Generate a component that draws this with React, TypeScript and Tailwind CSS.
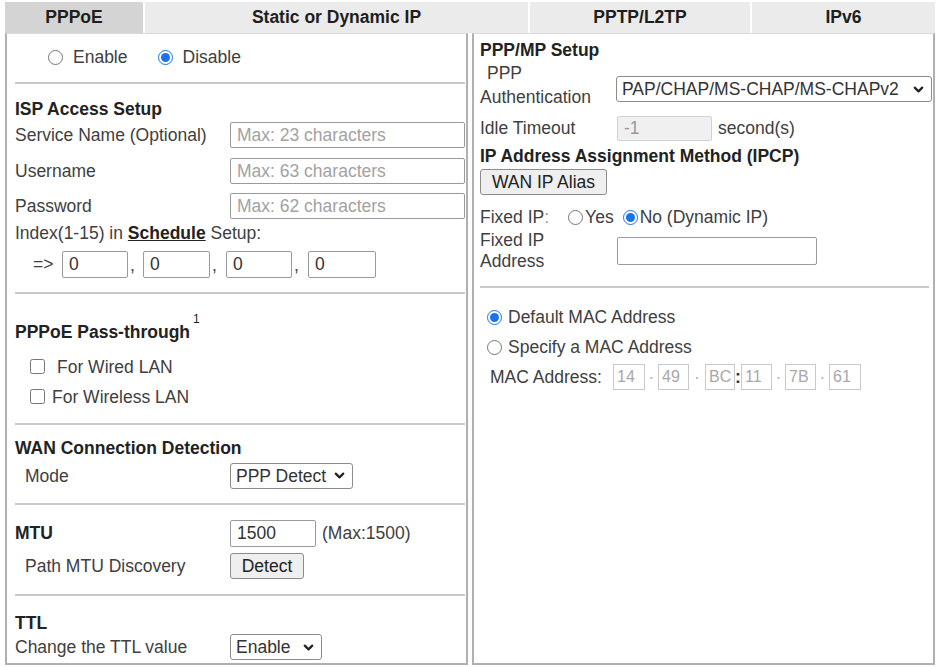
import { ChevronDown } from "lucide-react";

const Sep = () => <div className="h-[2px] bg-[#c8c8c8] shrink-0" />;

function Radio({ checked = false, className = "" }: { checked?: boolean; className?: string }) {
  return (
    <input
      type="radio"
      readOnly
      checked={checked}
      className={`w-[15px] h-[15px] m-0 shrink-0 accent-[#1a73e8] ${className}`}
    />
  );
}

function Check({ className = "" }: { className?: string }) {
  return <input type="checkbox" readOnly checked={false} className={`w-[15px] h-[15px] m-0 shrink-0 ${className}`} />;
}

function FakeSelect({ value, className = "" }: { value: string; className?: string }) {
  return (
    <div
      className={`flex items-center justify-between h-[26px] border border-[#8c8c8c] rounded-[3px] pl-[5px] pr-[5px] bg-white text-[#333] ${className}`}
    >
      <span className="whitespace-nowrap">{value}</span>
      <ChevronDown size={15} strokeWidth={3.5} className="text-[#222]" />
    </div>
  );
}

function TextBox({ placeholder, value, className = "" }: { placeholder?: string; value?: string; className?: string }) {
  return (
    <input
      readOnly
      placeholder={placeholder}
      value={value ?? ""}
      className={`h-[26px] border border-[#9a9a9a] rounded-[2px] px-[6px] bg-white text-[#333] placeholder:text-[#a2a2a2] ${className}`}
    />
  );
}

function Button({ label, className = "" }: { label: string; className?: string }) {
  return (
    <div
      className={`flex items-center justify-center h-[26px] bg-[#efefef] border border-[#8d8d8d] rounded-[3px] text-[#222] ${className}`}
    >
      {label}
    </div>
  );
}

function MacBox({ value, className = "" }: { value: string; className?: string }) {
  return (
    <div className={`h-[26px] border border-[#c9c9c9] text-[#a8a8a8] text-[16px] pl-[3px] flex items-center shrink-0 ${className}`}>
      {value}
    </div>
  );
}

const tabs = [
  { label: "PPPoE", w: "w-[140px]", active: true },
  { label: "Static or Dynamic IP", w: "w-[385px]", active: false },
  { label: "PPTP/L2TP", w: "w-[222px]", active: false },
  { label: "IPv6", w: "w-[183px]", active: false },
];

export default function App() {
  return (
    <div className="w-[940px] h-[667px] overflow-hidden bg-white font-['Liberation_Sans',Arial,sans-serif] text-[17.5px] text-[#404040] pt-[2px] pl-[5px]">
      {/* tab strip */}
      <div className="flex w-[930px] h-[31px]">
        {tabs.map((t) => (
          <div
            key={t.label}
            className={`${t.w} h-full flex items-center justify-center font-bold text-[#1e1e1e] border-r-2 border-white last:border-r-0 ${
              t.active ? "bg-[#d4d4d4]" : "bg-[#ebebeb]"
            }`}
          >
            {t.label}
          </div>
        ))}
      </div>

      <div className="flex gap-[4px] h-[632px]">
        {/* left column */}
        <div className="w-[463px] flex flex-col border-x-2 border-b-2 border-[#b0b0b0] border-t border-t-[#dadada] pl-[8px] pr-[1px]">
          <div className="mt-[10px] h-[26px] flex items-center">
            <Radio className="ml-[33px]" />
            <span className="ml-[10px]">Enable</span>
            <Radio checked className="ml-[30px]" />
            <span className="ml-[10px]">Disable</span>
          </div>
          <div className="mt-[12px]">
            <Sep />
          </div>

          <div className="mt-[13px] h-[24px] flex items-center font-bold text-[#222]">ISP Access Setup</div>
          <div className="mt-[1px] flex items-center">
            <span className="w-[215px]">Service Name (Optional)</span>
            <TextBox placeholder="Max: 23 characters" className="w-[235px]" />
          </div>
          <div className="mt-[10px] flex items-center">
            <span className="w-[215px]">Username</span>
            <TextBox placeholder="Max: 63 characters" className="w-[235px]" />
          </div>
          <div className="mt-[8px] flex items-center">
            <span className="w-[215px]">Password</span>
            <TextBox placeholder="Max: 62 characters" className="w-[235px]" />
          </div>
          <div className="mt-[2px] h-[24px] flex items-center whitespace-pre">
            <span>Index(1-15) in </span>
            <span className="font-bold underline text-[#222]">Schedule</span>
            <span> Setup:</span>
          </div>
          <div className="mt-[6px] flex items-center">
            <span className="ml-[18px] w-[29px]">=&gt;</span>
            <TextBox value="0" className="w-[66px] h-[27px]" />
            <span className="w-[15px] pl-[2px] self-end">,</span>
            <TextBox value="0" className="w-[67px] h-[27px]" />
            <span className="w-[16px] pl-[2px] self-end">,</span>
            <TextBox value="0" className="w-[66px] h-[27px]" />
            <span className="w-[16px] pl-[2px] self-end">,</span>
            <TextBox value="0" className="w-[68px] h-[27px]" />
          </div>
          <div className="mt-[14px]">
            <Sep />
          </div>

          <div className="mt-[26px] h-[24px] flex items-center font-bold text-[#222]">
            PPPoE Pass-through
            <sup className="text-[12px] font-normal ml-[3px] -top-[13px]">1</sup>
          </div>
          <div className="mt-[11px] h-[24px] flex items-center">
            <Check className="ml-[15px]" />
            <span className="ml-[12px]">For Wired LAN</span>
          </div>
          <div className="mt-[6px] h-[24px] flex items-center">
            <Check className="ml-[15px]" />
            <span className="ml-[7px]">For Wireless LAN</span>
          </div>
          <div className="mt-[14px]">
            <Sep />
          </div>

          <div className="mt-[11px] h-[24px] flex items-center font-bold text-[#222]">WAN Connection Detection</div>
          <div className="mt-[3px] flex items-center">
            <span className="w-[215px] pl-[10px]">Mode</span>
            <FakeSelect value="PPP Detect" className="w-[123px]" />
          </div>
          <div className="mt-[14px]">
            <Sep />
          </div>

          <div className="mt-[15px] flex items-center">
            <span className="w-[215px] font-bold text-[#222]">MTU</span>
            <TextBox value="1500" className="w-[86px] h-[27px]" />
            <span className="ml-[6px]">(Max:1500)</span>
          </div>
          <div className="mt-[6px] flex items-center">
            <span className="w-[215px] pl-[10px]">Path MTU Discovery</span>
            <Button label="Detect" className="w-[74px]" />
          </div>
          <div className="mt-[15px]">
            <Sep />
          </div>

          <div className="mt-[16px] h-[22px] flex items-center font-bold text-[#222]">TTL</div>
          <div className="flex items-center">
            <span className="w-[215px]">Change the TTL value</span>
            <FakeSelect value="Enable" className="w-[92px]" />
          </div>
        </div>

        {/* right column */}
        <div className="w-[463px] flex flex-col border-x-2 border-b-2 border-[#b0b0b0] border-t border-t-[#dadada] pl-[6px] pr-[1px]">
          <div className="mt-[5px] h-[22px] flex items-center font-bold text-[#222]">PPP/MP Setup</div>
          <div className="flex h-[48px]">
            <div className="w-[136px] flex flex-col leading-[24px]">
              <span className="pl-[7px]">PPP</span>
              <span>Authentication</span>
            </div>
            <FakeSelect value="PAP/CHAP/MS-CHAP/MS-CHAPv2" className="mt-[15px] w-[316px]" />
          </div>
          <div className="mt-[6px] flex items-center">
            <span className="w-[137px]">Idle Timeout</span>
            <div className="w-[95px] h-[25px] bg-[#f0f0f0] border border-[#d2d2d2] rounded-[2px] pl-[6px] flex items-center text-[#9a9a9a]">
              -1
            </div>
            <span className="ml-[6px]">second(s)</span>
          </div>
          <div className="mt-[4px] h-[22px] flex items-center font-bold text-[#222]">
            IP Address Assignment Method (IPCP)
          </div>
          <div className="mt-[2px] flex">
            <Button label="WAN IP Alias" className="w-[127px]" />
          </div>
          <div className="mt-[10px] h-[24px] flex items-center">
            <span>
              Fixed IP<span className="text-[#9a9a9a]">:</span>
            </span>
            <Radio className="ml-[19px]" />
            <span className="ml-[2px]">Yes</span>
            <Radio checked className="ml-[9px]" />
            <span className="ml-[2px]">No (Dynamic IP)</span>
          </div>
          <div className="mt-[1px] h-[42px] flex items-center">
            <div className="w-[137px] flex flex-col leading-[21px]">
              <span>Fixed IP</span>
              <span>Address</span>
            </div>
            <TextBox className="w-[200px] h-[28px]" />
          </div>
          <div className="mt-[14px] mr-[3px]">
            <Sep />
          </div>

          <div className="mt-[17px] h-[24px] flex items-center pl-[7px]">
            <Radio checked />
            <span className="ml-[6px]">Default MAC Address</span>
          </div>
          <div className="mt-[6px] h-[24px] flex items-center pl-[7px]">
            <Radio />
            <span className="ml-[6px]">Specify a MAC Address</span>
          </div>
          <div className="mt-[5px] flex items-center pl-[10px]">
            <span className="w-[123px] shrink-0">MAC Address:</span>
            <MacBox value="14" className="w-[32px]" />
            <span className="w-[13px] shrink-0 text-center text-[#b5b5b5]">·</span>
            <MacBox value="49" className="w-[31px]" />
            <span className="w-[16px] shrink-0 text-center text-[#b5b5b5]">·</span>
            <MacBox value="BC" className="w-[30px]" />
            <span className="w-[6px] shrink-0 text-center font-bold text-[#333]">:</span>
            <MacBox value="11" className="w-[31px]" />
            <span className="w-[13px] shrink-0 text-center text-[#b5b5b5]">·</span>
            <MacBox value="7B" className="w-[31px]" />
            <span className="w-[13px] shrink-0 text-center text-[#b5b5b5]">·</span>
            <MacBox value="61" className="w-[32px]" />
          </div>
        </div>
      </div>
    </div>
  );
}
